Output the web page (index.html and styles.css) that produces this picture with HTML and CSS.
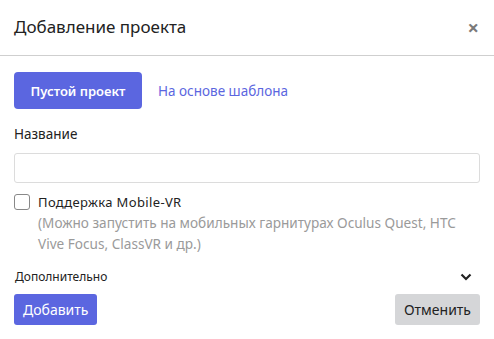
FILE: index.html
```html
<!DOCTYPE html>
<html lang="ru">
<head>
  <meta charset="UTF-8">
  <title>Добавление проекта</title>
  <link rel="stylesheet" href="styles.css">
</head>
<body>

  <div class="modal">
    <div class="modal-header">
      <h2>Добавление проекта</h2>
      <span class="close">&times;</span>
    </div>

    <div class="modal-body">
      <div class="tabs">
        <button class="tab active">Пустой проект</button>
        <a class="tab-link" href="#">На основе шаблона</a>
      </div>

      <label class="field-label" for="name">Название</label>
      <input type="text" id="name" class="text-input">

      <div class="check-row">
        <span class="checkbox"></span>
        <div class="check-text">
          <div class="check-title">Поддержка Mobile-VR</div>
          <div class="check-hint">(Можно запустить на мобильных гарнитурах Oculus Quest, HTC Vive Focus, ClassVR и др.)</div>
        </div>
      </div>

      <div class="extra">
        <span>Дополнительно</span>
        <svg class="chevron" width="12" height="8" viewBox="0 0 12 8">
          <path d="M1.5 1.5 L6 6 L10.5 1.5" fill="none" stroke="#222" stroke-width="2.2"/>
        </svg>
      </div>

      <div class="actions">
        <button class="btn primary">Добавить</button>
        <button class="btn secondary">Отменить</button>
      </div>
    </div>
  </div>

</body>
</html>
```

FILE: styles.css
```css
body {
  margin: 0;
  font-family: "Noto Sans", "Open Sans", sans-serif;
  background: white;
  color: #222;
}

.modal {
  width: 494px;
}

.modal-header {
  display: flex;
  justify-content: space-between;
  align-items: center;
  height: 55px;
  padding: 0 14px;
  border-bottom: 1px solid #cfcfcf;
}

.modal-header h2 {
  margin: 0;
  font-size: 17px;
  font-weight: normal;
  color: #222;
  padding-bottom: 2px;
}

.close {
  color: #7a7a7a;
  font-size: 20px;
  font-weight: bold;
  line-height: 1;
  margin-right: 1px;
}

.modal-body {
  padding: 16px 14px 0;
}

.tabs {
  display: flex;
  align-items: center;
  gap: 16px;
}

.tab {
  background: #5b66e0;
  color: white;
  border: none;
  border-radius: 4px;
  font-family: inherit;
  font-size: 13px;
  font-weight: 600;
  width: 128px;
  height: 37px;
  padding: 0;
}

.tab-link {
  color: #5b66e0;
  text-decoration: none;
  font-size: 13.5px;
}

.field-label {
  display: block;
  margin-top: 15px;
  font-size: 13.5px;
  line-height: 20px;
}

.text-input {
  display: block;
  box-sizing: border-box;
  width: 466px;
  height: 30px;
  margin-top: 9px;
  border: 1px solid #dcdcdc;
  border-radius: 3px;
}

.check-row {
  display: flex;
  gap: 8px;
  margin-top: 10px;
}

.checkbox {
  flex: none;
  box-sizing: border-box;
  width: 16px;
  height: 16px;
  margin-top: 1px;
  border: 1px solid #888;
  border-radius: 3px;
}

.check-title {
  font-size: 13px;
  letter-spacing: 0.35px;
  line-height: 18px;
}

.check-hint {
  color: #9a9a9a;
  font-size: 13.6px;
  line-height: 21px;
  margin-top: 1px;
  width: 430px;
}

.extra {
  display: flex;
  justify-content: space-between;
  align-items: center;
  margin-top: 14px;
  font-size: 12px;
  padding-left: 1px;
  padding-right: 8px;
}

.actions {
  display: flex;
  justify-content: space-between;
  margin-top: 9px;
}

.btn {
  border: none;
  border-radius: 3px;
  font-family: inherit;
  font-size: 14px;
  height: 31px;
  padding: 0 9px;
}

.primary {
  background: #5b66e0;
  color: white;
}

.secondary {
  background: #d5d6d8;
  color: #222;
}
```
